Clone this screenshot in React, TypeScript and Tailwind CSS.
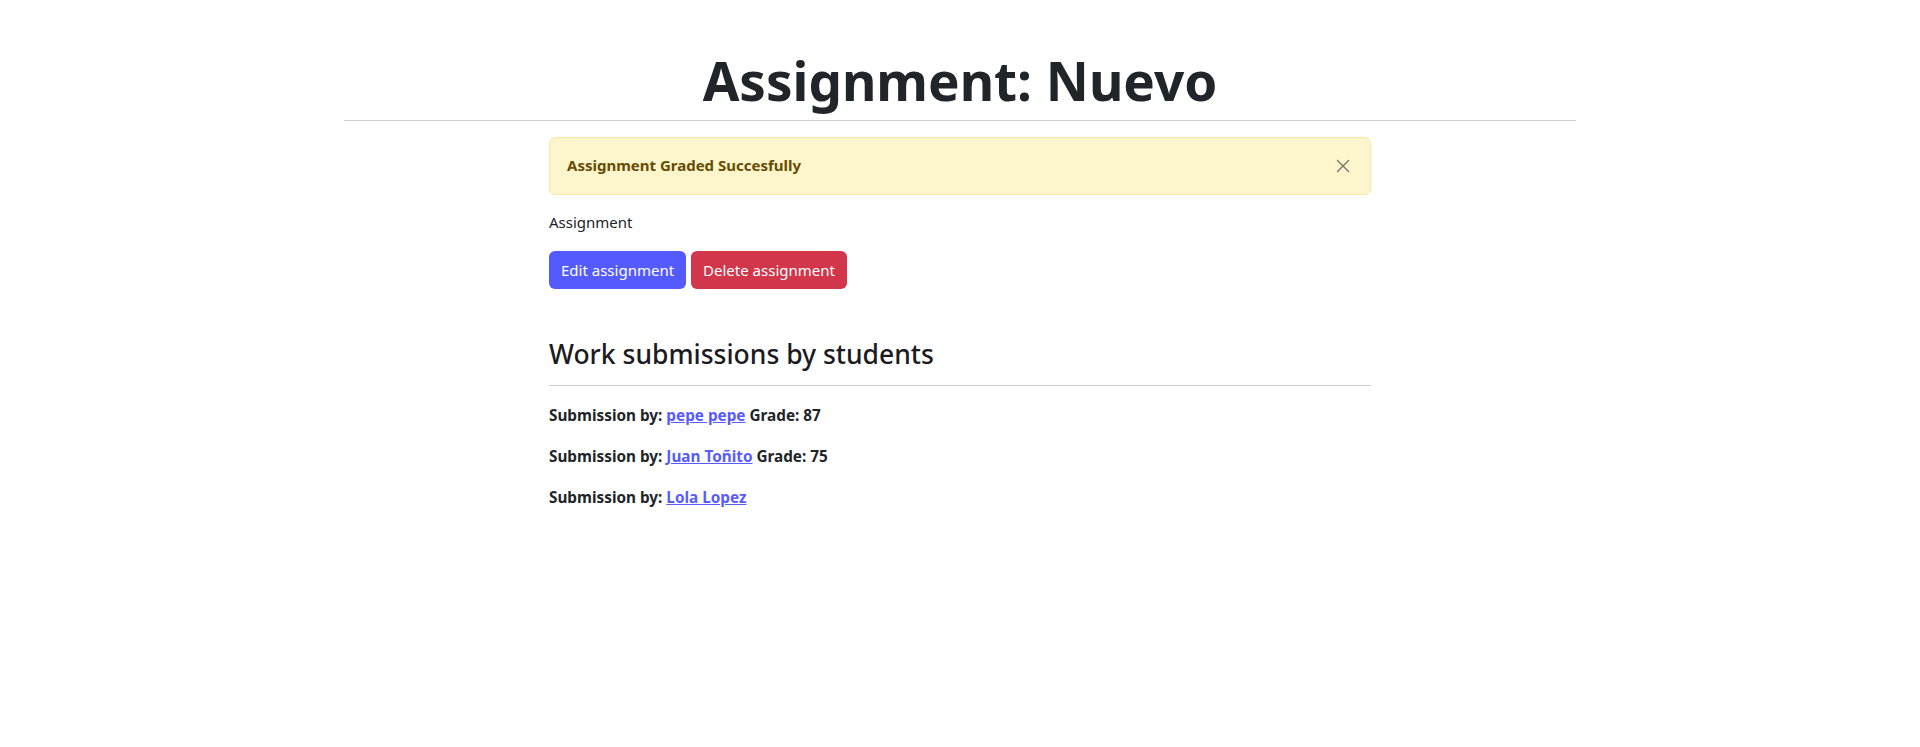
import { X } from "lucide-react";

// Página de una tarea: cabecera, aviso de calificación, acciones y entregas.

type Submission = { student: string; grade?: number };

const SUBMISSIONS: Submission[] = [
  { student: "pepe pepe", grade: 87 },
  { student: "Juan Toñito", grade: 75 },
  { student: "Lola Lopez" },
];

export default function App() {
  return (
    <div className="min-h-screen bg-white text-[#212529] font-['Segoe_UI','Noto_Sans','Open_Sans',sans-serif]">
      <h1 className="pt-[49px] text-center text-[53px] font-bold leading-[1.2]">Assignment: Nuevo</h1>
      <hr className="mx-auto mt-[7px] w-[1232px] border-0 border-t border-[#cfcfcf]" />

      <div className="mx-auto w-[822px] pt-[16px]">
        <div className="flex h-[58px] items-center justify-between rounded-[6px] border border-[#fbe9a3] bg-[#fdf5cc] pl-[17px] pr-[16px]">
          <span className="text-[15px] font-bold text-[#664d03]">Assignment Graded Succesfully</span>
          <button type="button" className="text-[#7a7565]">
            <X size={22} strokeWidth={1.5} />
          </button>
        </div>

        <p className="mt-[16px] text-[15px] leading-[1.5]">Assignment</p>

        <div className="mt-[18px] flex gap-[5px]">
          <button type="button" className="h-[38px] rounded-[6px] bg-[#535bfe] px-[12px] text-[15px] text-white">
            Edit assignment
          </button>
          <button type="button" className="h-[38px] rounded-[6px] bg-[#d2364a] px-[12px] text-[15px] text-white">
            Delete assignment
          </button>
        </div>

        <h3 className="mt-[50px] text-[26.5px] font-medium leading-[1.2] text-[#1c1b22]">Work submissions by students</h3>
        <hr className="mt-[14px] border-0 border-t border-[#cfcfcf]" />

        <div className="mt-[17px] flex flex-col gap-[17px]">
          {SUBMISSIONS.map((s) => (
            <p key={s.student} className="text-[15.3px] font-bold leading-[24px]">
              Submission by:{" "}
              <a href="#" className="text-[#585cff] underline">
                {s.student}
              </a>
              {s.grade !== undefined && <> Grade: {s.grade}</>}
            </p>
          ))}
        </div>
      </div>
    </div>
  );
}
